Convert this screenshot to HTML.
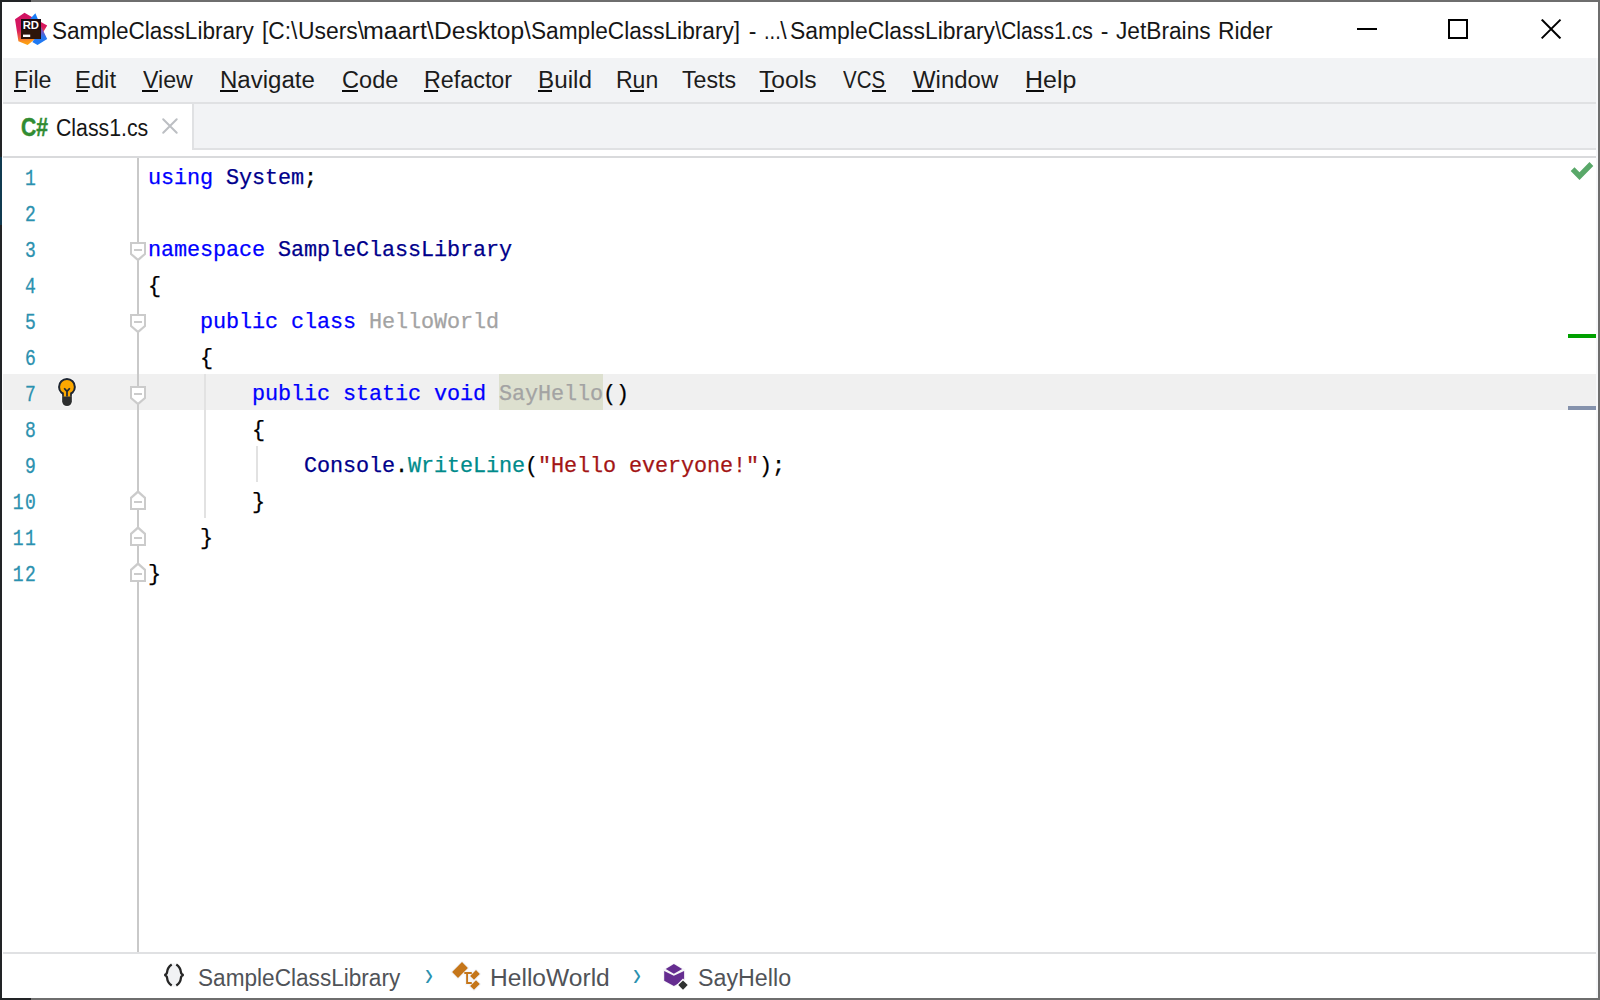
<!DOCTYPE html>
<html lang="en">
<head>
<meta charset="utf-8">
<title>SampleClassLibrary [C:\Users\maart\Desktop\SampleClassLibrary] - ...\SampleClassLibrary\Class1.cs - JetBrains Rider</title>
<style>
html,body{margin:0;padding:0;background:#6e6e6e;}
body{width:1600px;height:1000px;overflow:hidden;position:relative;font-family:'Liberation Sans', sans-serif;}
#win{position:absolute;left:0;top:0;width:1600px;height:1000px;overflow:hidden;background:#6e6e6e;}
#win div,#win span,#win i,#win svg{position:absolute;}
#title{white-space:pre;line-height:40px;height:40px;font-family:'Liberation Sans', sans-serif;}
#win #title span{position:static;display:inline-block;transform-origin:0 0;white-space:pre;line-height:40px;vertical-align:baseline;}
.t{white-space:pre;line-height:40px;transform-origin:0 0;display:block;font-family:'Liberation Sans', sans-serif;}
#inner{left:2px;top:2px;width:1596px;height:996px;background:#fff;}
#bl{left:0;top:0;width:2px;height:1000px;background:#222426;}
#bl2{left:0;top:157px;width:2px;height:68px;background:#103a50;}
#bt{left:0;top:0;width:31px;height:2px;background:#222426;}
#bb{left:0;top:998px;width:31px;height:2px;background:#222426;}
#menubar{left:3px;top:58px;width:1593px;height:44px;background:#f2f3f5;}
#menuline{left:3px;top:102px;width:1593px;height:2px;background:#e0e1e3;}
.ul{top:90px;height:2px;background:#0a0a0a;}
#tabbar{left:194px;top:104px;width:1402px;height:44px;background:#f2f3f5;}
#tabsep{left:192px;top:104px;width:2px;height:46px;background:#e0e1e3;}
#tabline{left:192px;top:148px;width:1404px;height:2px;background:#e0e1e3;}
#edline{left:3px;top:156px;width:1593px;height:2px;background:#d9dadc;}
#hl{left:3px;top:374px;width:1593px;height:36px;background:#f0f0f0;}
#sel{left:499px;top:374px;width:104px;height:36px;background:#dde0cf;}
#gut{left:137px;top:158px;width:2px;height:794px;background:#c9c9c9;}
.ig{width:2px;background:#e2e2e2;}
.ln{left:0;width:37.3px;text-align:right;font-family:'Liberation Mono', monospace;font-size:21.2px;letter-spacing:1.75px;transform-origin:100% 0;transform:scaleX(0.85);-webkit-text-stroke:0.3px currentColor;line-height:36px;height:36px;color:#2b91af;padding-top:3px;white-space:pre;}
.cl{left:148px;font-family:'Liberation Mono', monospace;font-size:21.8px;letter-spacing:-0.082px;-webkit-text-stroke:0.25px currentColor;line-height:36px;height:36px;white-space:pre;padding-top:2px;color:#000;transform:translateY(1px);}
.cl span{position:static !important;}
.fm{left:129px;}
.chev{top:943px;line-height:60px;font-size:34px;color:#2b91af;transform-origin:0 0;transform:scaleX(0.7);white-space:pre;font-family:'Liberation Sans', sans-serif;}
#bcline{left:3px;top:952px;width:1593px;height:2px;background:#e0e1e3;}
#rs{left:1596px;top:58px;width:2px;height:940px;background:#f6f7f9;}
#m1{left:1568px;top:334px;width:28px;height:4px;background:#00a000;}
#m2{left:1568px;top:406px;width:28px;height:4px;background:#8592ac;}
</style>
</head>
<body>
<div id="win">
<div id="inner"></div>
<div id="rs"></div><div id="bl"></div><div id="bl2"></div><div id="bt"></div><div id="bb"></div>

<!-- title bar -->
<svg id="logo" style="left:14px;top:12px" width="34" height="34" viewBox="14 12 34 34">
<defs>
<linearGradient id="g1" gradientUnits="userSpaceOnUse" x1="24" y1="13" x2="28" y2="45"><stop offset="0" stop-color="#cf1262"/><stop offset="0.5" stop-color="#d9195e"/><stop offset="0.72" stop-color="#ec5643"/><stop offset="0.88" stop-color="#fa9419"/><stop offset="1" stop-color="#fea60e"/></linearGradient>
<linearGradient id="g2" gradientUnits="userSpaceOnUse" x1="42" y1="27" x2="42" y2="45"><stop offset="0" stop-color="#a3489a"/><stop offset="0.3" stop-color="#6a5bc8"/><stop offset="0.55" stop-color="#2a76ee"/><stop offset="1" stop-color="#1a7cf5"/></linearGradient>
</defs>
<path d="M24.5 12.8L15 19.3L18.4 41.2L27.6 45L34.8 39.3L41 39L43.6 31.5L47.2 25.4L31 16.6Z" fill="url(#g1)"/>
<path d="M35.4 13.2L29.5 19.5H38Z" fill="#1a7cf5"/>
<path d="M41 26.5L43.6 31.5L47.2 39.1L37.5 45L32.3 42L34.8 38.5H41Z" fill="url(#g2)"/>
<rect x="21" y="19" width="20" height="20" fill="#1c0b12"/>
<rect x="21" y="30" width="19" height="9" fill="#2e150a"/>
<rect x="23" y="34.6" width="7.2" height="2.4" fill="#fff"/>
<text x="22.7" y="29.1" font-family="Liberation Sans, sans-serif" font-weight="bold" font-size="11" fill="#fff" textLength="16.3" lengthAdjust="spacingAndGlyphs">RD</text>
</svg>
<div id="title" style="left:52.02px;top:11px;font-size:23px;color:#161616"><span style="width:210.40px;transform:scaleX(0.9805)">SampleClassLibrary </span><span style="width:35.59px;transform:scaleX(0.9882)">[C:\</span><span style="width:65.42px;transform:scaleX(0.9961)">Users\</span><span style="width:70.69px;transform:scaleX(1.0857)">maart\</span><span style="width:97.39px;transform:scaleX(1.0674)">Desktop\</span><span style="width:217.24px;transform:scaleX(0.9852)">SampleClassLibrary] </span><span style="width:15.40px;transform:scaleX(1.0)">- </span><span style="width:16.10px;transform:scaleX(0.8733)">...</span><span style="width:9.75px;transform:scaleX(1.0)">\</span><span style="width:210.98px;transform:scaleX(0.9964)">SampleClassLibrary\</span><span style="width:99.92px;transform:scaleX(0.9219)">Class1.cs </span><span style="width:15.36px;transform:scaleX(1.0)">- </span><span style="width:101.75px;transform:scaleX(0.9867)">JetBrains </span><span style="width:80.00px;transform:scaleX(0.9953)">Rider</span></div>
<svg style="left:1350px;top:12px" width="220" height="34" viewBox="1350 12 220 34">
<rect x="1357" y="28" width="20" height="2" fill="#000"/>
<rect x="1449" y="20" width="18" height="18" stroke="#000" stroke-width="2" fill="none"/>
<path d="M1542.4 20.3L1559.8 37.7M1559.8 20.3L1542.4 37.7" stroke="#000" stroke-width="2" stroke-linecap="square" fill="none"/>
</svg>

<!-- menu bar -->
<div id="menubar"></div><div id="menuline"></div>
<span class="t" style="left:13.62px;top:60px;font-size:23.5px;color:#1c1c1c;transform:scaleX(0.99);">File </span>
<span class="t" style="left:75.47px;top:60px;font-size:23.5px;color:#1c1c1c;transform:scaleX(1.0132);">Edit </span>
<span class="t" style="left:142.5px;top:60px;font-size:23.5px;color:#1c1c1c;transform:scaleX(0.9853);">View </span>
<span class="t" style="left:219.85px;top:60px;font-size:23.5px;color:#1c1c1c;transform:scaleX(1.0233);">Navigate </span>
<span class="t" style="left:342.1px;top:60px;font-size:23.5px;color:#1c1c1c;transform:scaleX(1.0);">Code </span>
<span class="t" style="left:423.62px;top:60px;font-size:23.5px;color:#1c1c1c;transform:scaleX(0.992);">Refactor </span>
<span class="t" style="left:537.93px;top:60px;font-size:23.5px;color:#1c1c1c;transform:scaleX(1.0327);">Build </span>
<span class="t" style="left:615.79px;top:60px;font-size:23.5px;color:#1c1c1c;transform:scaleX(0.9787);">Run </span>
<span class="t" style="left:681.76px;top:60px;font-size:23.5px;color:#1c1c1c;transform:scaleX(0.9858);">Tests </span>
<span class="t" style="left:759.35px;top:60px;font-size:23.5px;color:#1c1c1c;transform:scaleX(1.0491);">Tools </span>
<span class="t" style="left:842.75px;top:60px;font-size:23.5px;color:#1c1c1c;transform:scaleX(0.8723);">VCS </span>
<span class="t" style="left:912.5px;top:60px;font-size:23.5px;color:#1c1c1c;transform:scaleX(1.019);">Window </span>
<span class="t" style="left:1025.38px;top:60px;font-size:23.5px;color:#1c1c1c;transform:scaleX(1.0611);">Help </span>
<i class="ul" style="left:14px;width:12px"></i>
<i class="ul" style="left:76px;width:12px"></i>
<i class="ul" style="left:142px;width:16px"></i>
<i class="ul" style="left:220px;width:18px"></i>
<i class="ul" style="left:342px;width:16px"></i>
<i class="ul" style="left:424px;width:14px"></i>
<i class="ul" style="left:538px;width:14px"></i>
<i class="ul" style="left:630px;width:14px"></i>
<i class="ul" style="left:760px;width:14px"></i>
<i class="ul" style="left:872px;width:14px"></i>
<i class="ul" style="left:912px;width:22px"></i>
<i class="ul" style="left:1026px;width:18px"></i>

<!-- tabs -->
<div id="tabbar"></div><div id="tabsep"></div><div id="tabline"></div>
<span class="t" style="left:21.27px;top:107px;font-size:25.5px;color:#318c32;transform:scaleX(0.8258);font-weight:bold;-webkit-text-stroke:0.5px currentColor;">C# </span>
<span class="t" style="left:56.07px;top:108px;font-size:23px;color:#161616;transform:scaleX(0.9255);">Class1.cs</span>
<svg style="left:160px;top:116px" width="20" height="20" viewBox="160 116 20 20"><path d="M163.2 119.2L176.7 132.7M176.7 119.2L163.2 132.7" stroke="#bcbfc3" stroke-width="2" stroke-linecap="round" fill="none"/></svg>

<!-- editor -->
<div id="edline"></div>
<div id="hl"></div><div id="sel"></div>
<div id="gut"></div>
<div class="ig" style="left:204px;top:374px;height:144px"></div>
<div class="ig" style="left:256px;top:446px;height:36px"></div>
<svg class="fm" style="top:230px" width="18" height="36" viewBox="129 0 18 36"><path d="M130 12H146V24.5L138 31.5L130 24.5Z" fill="#cbcbcb"/><path d="M132 14H144V23.4L138 28.4L132 23.4Z" fill="#fff"/><rect x="134" y="19" width="8" height="2" fill="#cbcbcb"/></svg>
<svg class="fm" style="top:302px" width="18" height="36" viewBox="129 0 18 36"><path d="M130 12H146V24.5L138 31.5L130 24.5Z" fill="#cbcbcb"/><path d="M132 14H144V23.4L138 28.4L132 23.4Z" fill="#fff"/><rect x="134" y="19" width="8" height="2" fill="#cbcbcb"/></svg>
<svg class="fm" style="top:374px" width="18" height="36" viewBox="129 0 18 36"><path d="M130 12H146V24.5L138 31.5L130 24.5Z" fill="#cbcbcb"/><path d="M132 14H144V23.4L138 28.4L132 23.4Z" fill="#fff"/><rect x="134" y="19" width="8" height="2" fill="#cbcbcb"/></svg>
<svg class="fm" style="top:482px" width="18" height="36" viewBox="129 0 18 36"><path d="M130 28H146V15.3L138 8L130 15.3Z" fill="#cbcbcb"/><path d="M132 26H144V16.4L138 11.2L132 16.4Z" fill="#fff"/><rect x="134" y="19" width="8" height="2" fill="#cbcbcb"/></svg>
<svg class="fm" style="top:518px" width="18" height="36" viewBox="129 0 18 36"><path d="M130 28H146V15.3L138 8L130 15.3Z" fill="#cbcbcb"/><path d="M132 26H144V16.4L138 11.2L132 16.4Z" fill="#fff"/><rect x="134" y="19" width="8" height="2" fill="#cbcbcb"/></svg>
<svg class="fm" style="top:554px" width="18" height="36" viewBox="129 0 18 36"><path d="M130 28H146V15.3L138 8L130 15.3Z" fill="#cbcbcb"/><path d="M132 26H144V16.4L138 11.2L132 16.4Z" fill="#fff"/><rect x="134" y="19" width="8" height="2" fill="#cbcbcb"/></svg>
<svg id="bulb" style="left:56px;top:376px" width="22" height="32" viewBox="56 376 22 32">
<path d="M67 377.2a9.6 9.6 0 0 0 -5.6 17.4v6.8a5.6 5.6 0 0 0 11.2 0v-6.8a9.6 9.6 0 0 0 -5.6 -17.4z" fill="#fff" opacity="0.6"/>
<circle cx="66.95" cy="386.9" r="7.9" fill="#fca800" stroke="#1f2733" stroke-width="2"/>
<rect x="63" y="391.5" width="8" height="5.3" fill="#fca800"/>
<path d="M63 392.6V396.8M71 392.6V396.8" fill="none" stroke="#1f2733" stroke-width="1.7"/>
<path d="M62.15 396.5H71.85V401.2a4.85 4.85 0 0 1 -9.7 0Z" fill="#2d2f2f"/>
<path d="M64.2 388.2L67 391.4L69.8 388.2M67 391V396.6" fill="none" stroke="#1f2733" stroke-width="1.7"/>
</svg>
<span class="ln" style="top:158px">1</span>
<div class="cl" style="top:158px"><span style="color:#0000ff">using</span> <span style="color:#00008b">System</span><span style="color:#000">;</span></div>
<span class="ln" style="top:194px">2</span>
<span class="ln" style="top:230px">3</span>
<div class="cl" style="top:230px"><span style="color:#0000ff">namespace</span> <span style="color:#00008b">SampleClassLibrary</span></div>
<span class="ln" style="top:266px">4</span>
<div class="cl" style="top:266px"><span style="color:#000">{</span></div>
<span class="ln" style="top:302px">5</span>
<div class="cl" style="top:302px">    <span style="color:#0000ff">public</span> <span style="color:#0000ff">class</span> <span style="color:#a3a3a3">HelloWorld</span></div>
<span class="ln" style="top:338px">6</span>
<div class="cl" style="top:338px">    <span style="color:#000">{</span></div>
<span class="ln" style="top:374px">7</span>
<div class="cl" style="top:374px">        <span style="color:#0000ff">public</span> <span style="color:#0000ff">static</span> <span style="color:#0000ff">void</span> <span style="color:#a3a3a3">SayHello</span><span style="color:#000">()</span></div>
<span class="ln" style="top:410px">8</span>
<div class="cl" style="top:410px">        <span style="color:#000">{</span></div>
<span class="ln" style="top:446px">9</span>
<div class="cl" style="top:446px">            <span style="color:#00008b">Console</span><span style="color:#000">.</span><span style="color:#008b8b">WriteLine</span><span style="color:#000">(</span><span style="color:#a31515">"Hello everyone!"</span><span style="color:#000">);</span></div>
<span class="ln" style="top:482px">10</span>
<div class="cl" style="top:482px">        <span style="color:#000">}</span></div>
<span class="ln" style="top:518px">11</span>
<div class="cl" style="top:518px">    <span style="color:#000">}</span></div>
<span class="ln" style="top:554px">12</span>
<div class="cl" style="top:554px"><span style="color:#000">}</span></div>
<svg style="left:1568px;top:160px" width="28" height="22" viewBox="1568 160 28 22"><path d="M1574.5 167.2L1570.7 171L1579.5 180L1593.3 166L1589.5 162.1L1579.5 172.3Z" fill="#59a869"/></svg>
<div id="m1"></div><div id="m2"></div>

<!-- breadcrumbs -->
<div id="bcline"></div>
<svg style="left:160px;top:960px" width="28" height="30" viewBox="160 960 28 30">
<ellipse cx="174" cy="975" rx="8.3" ry="11.8" fill="#f1f2f4"/>
<path d="M171.7 964.5C168.2 966.8 167.3 969.5 167.1 972C167 973.6 166.1 974.6 164.4 975C166.1 975.4 167 976.4 167.1 978C167.3 980.5 168.2 983.2 171.7 985.5" fill="none" stroke="#262626" stroke-width="2.3"/>
<path d="M176.3 964.5C179.8 966.8 180.7 969.5 180.9 972C181 973.6 181.9 974.6 183.6 975C181.9 975.4 181 976.4 180.9 978C180.7 980.5 179.8 983.2 176.3 985.5" fill="none" stroke="#262626" stroke-width="2.3"/>
</svg>
<svg style="left:420px;top:958px" width="70" height="36" viewBox="420 958 70 36">
<g fill="#f4f6f9" stroke="#f4f6f9" stroke-width="2.6" stroke-linejoin="round">
<path d="M452.1 972L462 962.1L467.9 968L458 978Z"/>
<path d="M470.1 976L476 970.1L479.8 973.9L474 979.8Z"/>
<path d="M470.1 986L476 980.3L479.8 984.1L474 989.8Z"/>
<path d="M464.3 972H471.8V983.9H466.2V973.9H464.3Z"/>
</g>
<g fill="#c5761a">
<path d="M452.1 972L462 962.1L467.9 968L458 978Z"/>
<path d="M470.1 976L476 970.1L479.8 973.9L474 979.8Z"/>
<path d="M470.1 986L476 980.3L479.8 984.1L474 989.8Z"/>
<path d="M464.3 972H471.8V973.9H468.05V982.05H471.8V983.95H466.15V973.9H464.3Z"/>
</g>
</svg>
<svg style="left:628px;top:958px" width="64" height="36" viewBox="628 958 64 36">
<path d="M673.9 963L685.2 969.5V981.3L673.9 987.2L663.1 981.3V969.5Z" fill="#f6f6f8"/>
<path d="M673.87 964L682.2 968.9L673.87 973.7L665.7 968.9Z" fill="#652d90"/>
<path d="M664.2 971L673.87 975.8L684.1 971V980.7L673.87 986L664.2 980.7Z" fill="#652d90"/>
<path d="M683 978.6L689.5 985.1L683 991.6L676.5 985.1Z" fill="#fff"/>
<path d="M683 980.4L687.7 985.1L683 989.8L678.3 985.1Z" fill="#2f3131"/>
</svg>
<span class="t" style="left:198.02px;top:958px;font-size:23px;color:#505358;transform:scaleX(0.9829);">SampleClassLibrary</span>
<span class="chev" style="left:425.1px">›</span>
<span class="t" style="left:489.86px;top:958px;font-size:23px;color:#505358;transform:scaleX(1.0688);">HelloWorld</span>
<span class="chev" style="left:633.1px">›</span>
<span class="t" style="left:697.99px;top:958px;font-size:23px;color:#505358;transform:scaleX(1.0111);">SayHello</span>
</div>
</body>
</html>
